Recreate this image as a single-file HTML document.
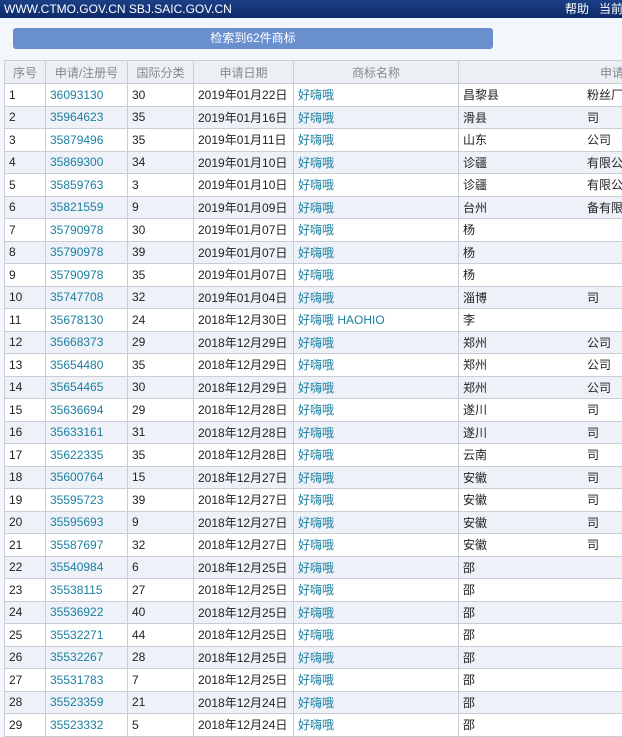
<!DOCTYPE html>
<html><head><meta charset="utf-8"><style>
body{margin:0;width:622px;height:737px;overflow:hidden;background:#f3f6fb;font-family:"Liberation Sans","Noto Sans CJK SC",sans-serif;font-size:12px;color:#222;position:relative}
.top{position:absolute;left:0;top:0;width:622px;height:18px;background:linear-gradient(#1b3f86,#0e2a6a);color:#fff;font-size:12px;line-height:18px;white-space:nowrap;overflow:hidden}
.top .l{position:absolute;left:4px}
.top .r{position:absolute;left:565px;white-space:nowrap}
.btn{position:absolute;left:13px;top:28px;width:480px;height:21px;background:#6a8fcf;border-radius:3px;color:#fff;text-align:center;line-height:21px;font-size:12px}
table{position:absolute;left:4px;top:60px;border-collapse:collapse;table-layout:fixed;width:640px}
td,th{border:1px solid #c9ced6;padding:0 0 0 4px;white-space:nowrap;overflow:hidden;height:21.5px;font-weight:normal;text-align:left}
th{background:#eceff4;color:#888;text-align:center;height:22px;padding:0}
tr:nth-child(odd) td{background:#fff}
tr:nth-child(even) td{background:#eef2f8}
.b{color:#1a7fa0}
.a{position:relative}
.a span{position:absolute;left:128px}
</style></head><body>
<div class="top"><span class="l">WWW.CTMO.GOV.CN SBJ.SAIC.GOV.CN</span><span class="r">帮助&nbsp;&nbsp;&nbsp;当前</span></div>
<div class="btn">检索到62件商标</div>
<table>
<colgroup><col style="width:41px"><col style="width:82px"><col style="width:66px"><col style="width:100px"><col style="width:165px"><col style="width:186px"></colgroup>
<thead><tr><th>序号</th><th>申请/注册号</th><th>国际分类</th><th>申请日期</th><th>商标名称</th><th style="text-align:right;padding-right:20px">申请</th></tr></thead>
<tbody>
<tr><td>1</td><td class="b">36093130</td><td>30</td><td>2019年01月22日</td><td class="b">好嗨哦</td><td class="a">昌黎县<span>粉丝厂</span></td></tr>
<tr><td>2</td><td class="b">35964623</td><td>35</td><td>2019年01月16日</td><td class="b">好嗨哦</td><td class="a">滑县<span>司</span></td></tr>
<tr><td>3</td><td class="b">35879496</td><td>35</td><td>2019年01月11日</td><td class="b">好嗨哦</td><td class="a">山东<span>公司</span></td></tr>
<tr><td>4</td><td class="b">35869300</td><td>34</td><td>2019年01月10日</td><td class="b">好嗨哦</td><td class="a">诊疆 <span>有限公司</span></td></tr>
<tr><td>5</td><td class="b">35859763</td><td>3</td><td>2019年01月10日</td><td class="b">好嗨哦</td><td class="a">诊疆 <span>有限公司</span></td></tr>
<tr><td>6</td><td class="b">35821559</td><td>9</td><td>2019年01月09日</td><td class="b">好嗨哦</td><td class="a">台州<span>备有限公</span></td></tr>
<tr><td>7</td><td class="b">35790978</td><td>30</td><td>2019年01月07日</td><td class="b">好嗨哦</td><td class="a">杨</td></tr>
<tr><td>8</td><td class="b">35790978</td><td>39</td><td>2019年01月07日</td><td class="b">好嗨哦</td><td class="a">杨</td></tr>
<tr><td>9</td><td class="b">35790978</td><td>35</td><td>2019年01月07日</td><td class="b">好嗨哦</td><td class="a">杨</td></tr>
<tr><td>10</td><td class="b">35747708</td><td>32</td><td>2019年01月04日</td><td class="b">好嗨哦</td><td class="a">淄博<span>司</span></td></tr>
<tr><td>11</td><td class="b">35678130</td><td>24</td><td>2018年12月30日</td><td class="b">好嗨哦 HAOHIO</td><td class="a">李</td></tr>
<tr><td>12</td><td class="b">35668373</td><td>29</td><td>2018年12月29日</td><td class="b">好嗨哦</td><td class="a">郑州<span>公司</span></td></tr>
<tr><td>13</td><td class="b">35654480</td><td>35</td><td>2018年12月29日</td><td class="b">好嗨哦</td><td class="a">郑州<span>公司</span></td></tr>
<tr><td>14</td><td class="b">35654465</td><td>30</td><td>2018年12月29日</td><td class="b">好嗨哦</td><td class="a">郑州<span>公司</span></td></tr>
<tr><td>15</td><td class="b">35636694</td><td>29</td><td>2018年12月28日</td><td class="b">好嗨哦</td><td class="a">遂川<span>司</span></td></tr>
<tr><td>16</td><td class="b">35633161</td><td>31</td><td>2018年12月28日</td><td class="b">好嗨哦</td><td class="a">遂川<span>司</span></td></tr>
<tr><td>17</td><td class="b">35622335</td><td>35</td><td>2018年12月28日</td><td class="b">好嗨哦</td><td class="a">云南<span>司</span></td></tr>
<tr><td>18</td><td class="b">35600764</td><td>15</td><td>2018年12月27日</td><td class="b">好嗨哦</td><td class="a">安徽<span>司</span></td></tr>
<tr><td>19</td><td class="b">35595723</td><td>39</td><td>2018年12月27日</td><td class="b">好嗨哦</td><td class="a">安徽<span>司</span></td></tr>
<tr><td>20</td><td class="b">35595693</td><td>9</td><td>2018年12月27日</td><td class="b">好嗨哦</td><td class="a">安徽<span>司</span></td></tr>
<tr><td>21</td><td class="b">35587697</td><td>32</td><td>2018年12月27日</td><td class="b">好嗨哦</td><td class="a">安徽<span>司</span></td></tr>
<tr><td>22</td><td class="b">35540984</td><td>6</td><td>2018年12月25日</td><td class="b">好嗨哦</td><td class="a">邵</td></tr>
<tr><td>23</td><td class="b">35538115</td><td>27</td><td>2018年12月25日</td><td class="b">好嗨哦</td><td class="a">邵</td></tr>
<tr><td>24</td><td class="b">35536922</td><td>40</td><td>2018年12月25日</td><td class="b">好嗨哦</td><td class="a">邵</td></tr>
<tr><td>25</td><td class="b">35532271</td><td>44</td><td>2018年12月25日</td><td class="b">好嗨哦</td><td class="a">邵</td></tr>
<tr><td>26</td><td class="b">35532267</td><td>28</td><td>2018年12月25日</td><td class="b">好嗨哦</td><td class="a">邵</td></tr>
<tr><td>27</td><td class="b">35531783</td><td>7</td><td>2018年12月25日</td><td class="b">好嗨哦</td><td class="a">邵</td></tr>
<tr><td>28</td><td class="b">35523359</td><td>21</td><td>2018年12月24日</td><td class="b">好嗨哦</td><td class="a">邵</td></tr>
<tr><td>29</td><td class="b">35523332</td><td>5</td><td>2018年12月24日</td><td class="b">好嗨哦</td><td class="a">邵</td></tr>
</tbody></table>
</body></html>
